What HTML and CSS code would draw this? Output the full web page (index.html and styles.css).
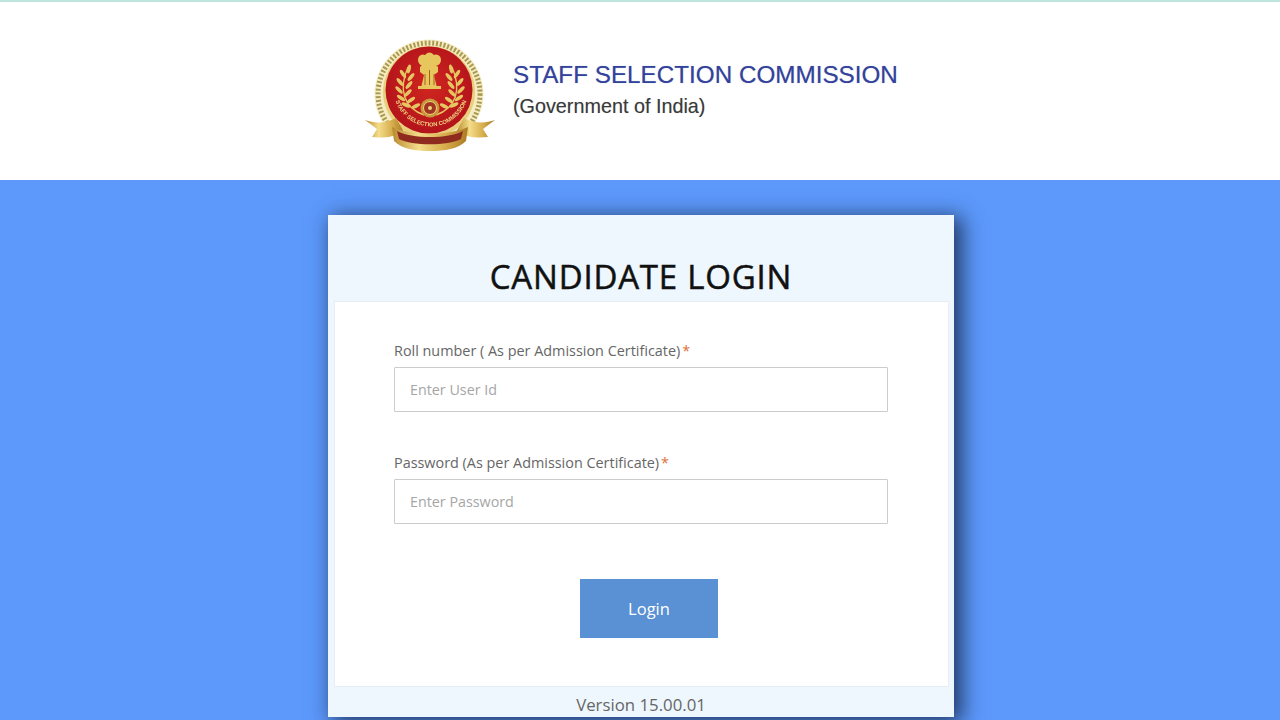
FILE: index.html
```html
<!DOCTYPE html>
<html lang="en">
<head>
<meta charset="utf-8">
<title>Candidate Login</title>
<link rel="stylesheet" href="styles.css">
</head>
<body>
<header class="site-header">
  <svg class="emblem" viewBox="360 35 140 120" width="140" height="120" aria-label="SSC emblem">
    <defs>
      <radialGradient id="red" cx="50%" cy="45%" r="55%"><stop offset="0" stop-color="#d0261f"/><stop offset="1" stop-color="#b3131b"/></radialGradient>
      <linearGradient id="gold" x1="0" y1="0" x2="1" y2="0"><stop offset="0" stop-color="#b98a2e"/><stop offset=".35" stop-color="#f4dc8a"/><stop offset=".7" stop-color="#d6ac4c"/><stop offset="1" stop-color="#a97b25"/></linearGradient>
      <path id="arcText" d="M394 95 A37.500 37.500 0 0 0 468 95"/>
      <g id="wreath">
        <path d="M424 115 C404 108 398 90 408 67" fill="none" stroke="#e6c663" stroke-width="1.400"/>
        <g fill="#e6c663">
          <ellipse cx="409" cy="69" rx="1.800" ry="4.500" transform="rotate(12 409 69)"/>
          <ellipse cx="403" cy="74" rx="1.800" ry="4.800" transform="rotate(-35 403 74)"/>
          <ellipse cx="411" cy="77" rx="1.800" ry="4.800" transform="rotate(40 411 77)"/>
          <ellipse cx="400" cy="82" rx="1.800" ry="4.800" transform="rotate(-40 400 82)"/>
          <ellipse cx="409" cy="85" rx="1.800" ry="4.800" transform="rotate(40 409 85)"/>
          <ellipse cx="399" cy="90" rx="1.800" ry="4.800" transform="rotate(-45 399 90)"/>
          <ellipse cx="408" cy="93" rx="1.800" ry="4.800" transform="rotate(45 408 93)"/>
          <ellipse cx="401" cy="98" rx="1.800" ry="4.800" transform="rotate(-55 401 98)"/>
          <ellipse cx="411" cy="100" rx="1.800" ry="4.800" transform="rotate(55 411 100)"/>
          <ellipse cx="406" cy="105" rx="1.800" ry="4.800" transform="rotate(-65 406 105)"/>
          <ellipse cx="416" cy="106" rx="1.800" ry="4.500" transform="rotate(65 416 106)"/>
        </g>
      </g>
    </defs>
    <circle cx="429" cy="94" r="54.500" fill="#f6ecc4"/>
    <circle cx="429" cy="94" r="51" fill="none" stroke="#a99a52" stroke-width="5" stroke-dasharray="2 1.800"/>
    <circle cx="429" cy="92" r="46" fill="#e9cf7c"/>
    <circle cx="429" cy="90" r="43.500" fill="url(#red)"/>
    <g fill="#e8c65e">
      <path d="M421 55h17v5l-3 4 3 3v5l-4 3 3 13h-16l3-13-4-3v-5l3-3-3-4z"/>
      <ellipse cx="423" cy="60" rx="5" ry="5.500"/><ellipse cx="436" cy="60" rx="5" ry="5.500"/><ellipse cx="429.500" cy="58" rx="5" ry="5.500"/>
      <rect x="418" y="86" width="23" height="3"/>
    </g>
    <path d="M429.500 70v15M425 74v11M434 74v11" stroke="#a8611c" stroke-width="1" fill="none"/>
    <use href="#wreath"/>
    <use href="#wreath" transform="translate(860 0) scale(-1 1)"/>
    <circle cx="430" cy="108" r="9.500" fill="#c9983c"/>
    <circle cx="430" cy="108" r="6.500" fill="#a23422" stroke="#eed481" stroke-width="1"/>
    <circle cx="430" cy="108" r="2" fill="#eed481"/>
    <text class="emblem-arc"><textPath href="#arcText" startOffset="50%" text-anchor="middle">STAFF SELECTION COMMISSION</textPath></text>
    <path d="M365 120 C376 124 386 123 396 118 L404 132 C392 138 381 138 372 137 L377 129z" fill="url(#gold)"/>
    <path d="M495 120 C484 124 474 123 464 118 L456 132 C468 138 479 138 488 137 L483 129z" fill="url(#gold)"/>
    <path d="M392 127 C410 136 450 136 468 127 L466 141 C458 149 445 151 430 151 C415 151 402 149 394 141z" fill="url(#gold)"/>
    <path d="M397 131 C412 139 448 139 463 131 L461 139 C448 146 412 146 399 139z" fill="#8f2a1e"/>
  </svg>
  <div class="brand">
    <div class="brand-name">STAFF SELECTION COMMISSION</div>
    <div class="brand-sub">(Government of India)</div>
  </div>
</header>
<main class="stage">
  <section class="card">
    <h1 class="card-title">CANDIDATE LOGIN</h1>
    <form class="card-body">
      <div class="field">
        <label class="field-label" for="user">Roll number ( As per Admission Certificate)<span class="req">*</span></label>
        <input class="field-input" id="user" type="text" placeholder="Enter User Id">
      </div>
      <div class="field">
        <label class="field-label" for="pass">Password (As per Admission Certificate)<span class="req">*</span></label>
        <input class="field-input" id="pass" type="password" placeholder="Enter Password">
      </div>
      <button class="login-btn" type="button">Login</button>
    </form>
    <footer class="card-foot">Version 15.00.01</footer>
  </section>
</main>
</body>
</html>
```
FILE: styles.css
```css
* { box-sizing: border-box; }
html, body { margin: 0; height: 100%; }
body {
  height: 720px;
  overflow: hidden;
  display: flex;
  flex-direction: column;
  background: #5c99fb;
  font-family: "Open Sans", sans-serif;
}
.site-header {
  height: 180px;
  flex: none;
  background: #fff;
  border-top: 2px solid #bfe6de;
  display: flex;
  align-items: flex-start;
  padding: 33px 0 0 360px;
}
.emblem { flex: none; display: block; filter: blur(0.6px); }
.brand {
  margin: 25px 0 0 13px;
  font-family: "Liberation Sans", Arial, sans-serif;
}
.brand-name { font-size: 24.250px; line-height: 30px; color: #33429a; text-shadow: 0 0 1px rgba(51, 66, 154, .45); }
.brand-sub { font-size: 19.800px; line-height: 26px; margin-top: 3px; color: #3a3a3a; text-shadow: 0 0 1px rgba(58, 58, 58, .3); }
.emblem-arc { font: 700 5.800px "Liberation Sans", sans-serif; fill: #eed481; }
.stage { flex: 1; padding-top: 35px; }
.card {
  width: 626px;
  height: 502px;
  margin-left: 328px;
  background: #eef7fe;
  box-shadow: 6px 4px 20px 2px rgba(15, 25, 50, .75);
  display: flex;
  flex-direction: column;
}
.card-title {
  height: 86px;
  flex: none;
  margin: 0;
  padding-top: 39px;
  text-align: center;
  font-size: 33px;
  line-height: 46px;
  font-weight: 400;
  color: #111;
  letter-spacing: .8px;
  -webkit-text-stroke: .5px #111;
}
.card-body {
  height: 386px;
  flex: none;
  margin: 0 5px 0 6px;
  padding: 37px 60px 0 59px;
  background: #fff;
  border: 1px solid #e8edf2;
}
.field { margin-bottom: 39px; }
.field-label {
  display: block;
  font-size: 14.400px;
  line-height: 24px;
  margin-bottom: 4px;
  color: #666;
}
.req { color: #e0703c; margin-left: 2px; }
.field-input {
  display: block;
  width: 494px;
  height: 45px;
  padding: 0 15px;
  border: 1px solid #ccc;
  border-radius: 1px;
  font: 14.300px "Open Sans", sans-serif;
  color: #555;
  background: #fff;
}
.field-input::placeholder { color: #a6a6a6; opacity: 1; }
.login-btn {
  display: block;
  width: 138px;
  height: 59px;
  margin: 55px 0 0 186px;
  border: 0;
  background: #5a90d4;
  color: #fff;
  font: 500 16.500px "Open Sans", sans-serif;
}
.card-foot {
  flex: 1;
  text-align: center;
  font-size: 16.800px;
  line-height: 36px;
  color: #666;
}
```
